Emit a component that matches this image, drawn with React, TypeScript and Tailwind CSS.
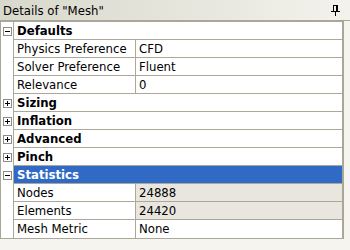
import React from "react";

type Row =
  | { kind: "section"; label: string; open: boolean; selected?: boolean }
  | { kind: "prop"; name: string; value: string; readOnly?: boolean };

const rows: Row[] = [
  { kind: "section", label: "Defaults", open: true },
  { kind: "prop", name: "Physics Preference", value: "CFD" },
  { kind: "prop", name: "Solver Preference", value: "Fluent" },
  { kind: "prop", name: "Relevance", value: "0" },
  { kind: "section", label: "Sizing", open: false },
  { kind: "section", label: "Inflation", open: false },
  { kind: "section", label: "Advanced", open: false },
  { kind: "section", label: "Pinch", open: false },
  { kind: "section", label: "Statistics", open: true, selected: true },
  { kind: "prop", name: "Nodes", value: "24888", readOnly: true },
  { kind: "prop", name: "Elements", value: "24420", readOnly: true },
  { kind: "prop", name: "Mesh Metric", value: "None" },
];

function ToggleBox({ open }: { open: boolean }) {
  return (
    <svg width="9" height="9" viewBox="0 0 9 9" className="block">
      <rect x="0.5" y="0.5" width="8" height="8" fill="#ffffff" stroke="#8c8c8c" />
      <rect x="2" y="4" width="5" height="1" fill="#000000" />
      {!open && <rect x="4" y="2" width="1" height="5" fill="#000000" />}
    </svg>
  );
}

function PinIcon() {
  return (
    <svg width="9" height="11" viewBox="0 0 9 11" className="block">
      <rect x="2" y="0" width="5" height="1" fill="#000" />
      <rect x="2" y="0" width="1" height="6" fill="#000" />
      <rect x="5" y="0" width="2" height="6" fill="#000" />
      <rect x="0" y="6" width="9" height="1" fill="#000" />
      <rect x="4" y="7" width="1" height="4" fill="#000" />
    </svg>
  );
}

export default function App() {
  return (
    <div
      className="w-[350px] h-[250px] overflow-hidden bg-[#f5f4ef] text-black"
      style={{ fontFamily: '"DejaVu Sans Condensed", "DejaVu Sans", Verdana, sans-serif' }}
    >
      <div className="h-[21px] flex items-center justify-between pl-[3px] pr-[10px] bg-gradient-to-r from-[#d9d8cc] to-[#f3f2ec] border-b border-[#a9a797]">
        <span className="text-[13px] leading-none">Details of "Mesh"</span>
        <PinIcon />
      </div>
      <div className="w-[344px] flex bg-white border-t border-r-2 border-b border-l border-[#a9a797]">
        <div className="w-[13px] flex flex-col border-r border-[#aca899]">
          {rows.map((r, i) => (
            <div key={i} className="h-[18px] flex items-center justify-center">
              {r.kind === "section" && <ToggleBox open={r.open} />}
            </div>
          ))}
        </div>
        <div className="flex-1 flex flex-col">
          {rows.map((r, i) =>
            r.kind === "section" ? (
              <div
                key={i}
                className={
                  "h-[18px] flex items-center pl-[3px] border-b border-[#aca899] font-bold text-[13px] " +
                  (r.selected ? "bg-[#316ac5] text-white" : "")
                }
              >
                {r.label}
              </div>
            ) : (
              <div key={i} className="h-[18px] flex border-b border-[#aca899] text-[13px] last:border-b-0">
                <div className="w-[122px] flex items-center pl-[3px] border-r border-[#aca899]">{r.name}</div>
                <div
                  className={
                    "flex-1 flex items-center pl-[3px] " + (r.readOnly ? "bg-[#e8e6df]" : "")
                  }
                >
                  {r.value}
                </div>
              </div>
            )
          )}
        </div>
      </div>
    </div>
  );
}
